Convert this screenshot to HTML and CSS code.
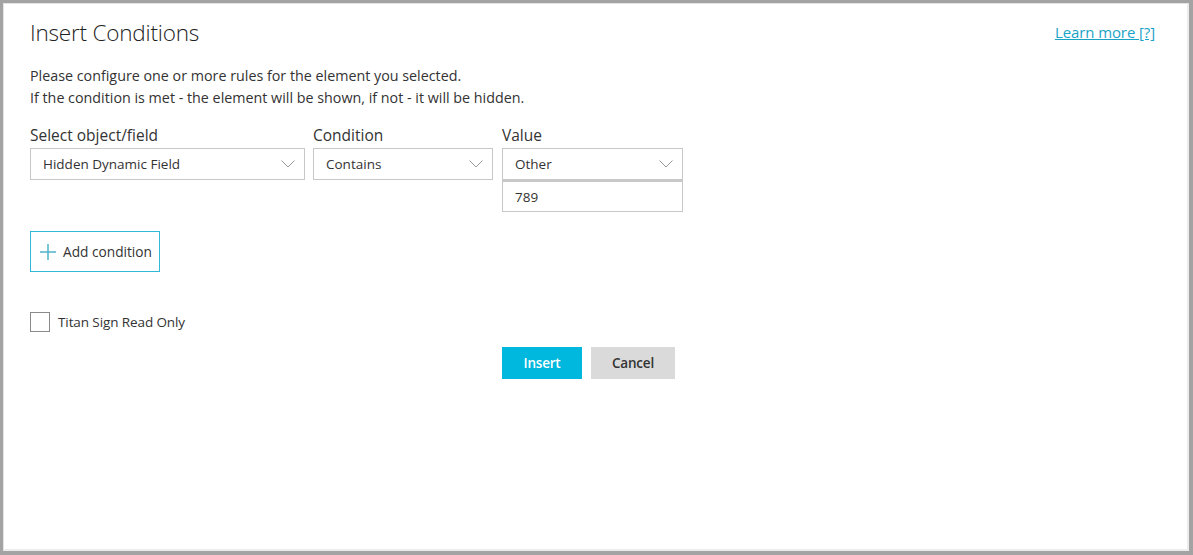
FILE: index.html
```html
<!DOCTYPE html>
<html lang="en">
<head>
<meta charset="utf-8">
<title>Insert Conditions</title>
<link rel="stylesheet" href="styles.css">
</head>
<body>
<div class="frame">
  <div class="dialog">
    <header class="head">
      <h1 class="title">Insert Conditions</h1>
      <a class="learn" href="#">Learn more [?]</a>
    </header>
    <p class="desc">Please configure one or more rules for the element you selected.<br>If the condition is met - the element will be shown, if not - it will be hidden.</p>

    <div class="rule">
      <div class="col col-field">
        <label class="lbl">Select object/field</label>
        <div class="select"><span>Hidden Dynamic Field</span><svg class="chev" viewBox="0 0 14 8" width="14" height="8"><path d="M0.5 0.5 L7 7 L13.5 0.5" fill="none" stroke="#9a9a9a" stroke-width="1"/></svg></div>
      </div>
      <div class="col col-cond">
        <label class="lbl">Condition</label>
        <div class="select"><span>Contains</span><svg class="chev" viewBox="0 0 14 8" width="14" height="8"><path d="M0.5 0.5 L7 7 L13.5 0.5" fill="none" stroke="#9a9a9a" stroke-width="1"/></svg></div>
      </div>
      <div class="col col-val">
        <label class="lbl">Value</label>
        <div class="select"><span>Other</span><svg class="chev" viewBox="0 0 14 8" width="14" height="8"><path d="M0.5 0.5 L7 7 L13.5 0.5" fill="none" stroke="#9a9a9a" stroke-width="1"/></svg></div>
        <div class="input">789</div>
      </div>
    </div>

    <button class="add" type="button"><svg class="plus" viewBox="0 0 16 16" width="16" height="16"><path d="M8 0 V16 M0 8 H16" stroke="#4fb3cc" stroke-width="1.5" fill="none"/></svg><span>Add condition</span></button>

    <label class="check"><span class="box"></span><span>Titan Sign Read Only</span></label>

    <div class="actions">
      <button class="btn btn-primary" type="button">Insert</button>
      <button class="btn btn-secondary" type="button">Cancel</button>
    </div>
  </div>
</div>
</body>
</html>
```
FILE: styles.css
```css
* { box-sizing: border-box; }
html, body { margin: 0; padding: 0; background: #a0a0a0; }
body { font-family: "Open Sans", "Noto Sans", sans-serif; color: #333; }

.frame {
  width: 1193px;
  height: 555px;
  background: #fff;
  border-style: solid;
  border-color: #a3a3a3;
  border-width: 3px 4px 4px 3px;
  box-shadow: inset 1px 1px 0 #e4e4e4, inset -2px -2px 0 #ececec;
}

.dialog { padding: 15px 34px 0 27px; }

.head { display: flex; justify-content: space-between; align-items: flex-start; }
.title { margin: 0; font-size: 22.5px; font-weight: 300; color: #222; line-height: 30px; letter-spacing: -0.2px; }
.learn { margin-top: 4px; font-size: 15px; color: #1ba3c6; text-decoration: underline; line-height: 20px; letter-spacing: -0.1px; }

.desc { margin: 17px 0 0; font-size: 14.3px; line-height: 22px; color: #333; letter-spacing: 0; }

.rule { display: flex; gap: 8px; margin-top: 16px; }
.col { display: flex; flex-direction: column; }
.col-field { width: 275px; }
.col-cond { width: 180px; }
.col-val { width: 181px; margin-left: 1px; }
.lbl { font-size: 15.5px; line-height: 20px; margin-bottom: 3px; color: #333; letter-spacing: 0; }

.select {
  height: 32px;
  border: 1px solid #c8c8c8;
  display: flex; align-items: center; justify-content: space-between;
  padding: 0 9px 0 12px;
  font-size: 13.5px; color: #333; letter-spacing: 0;
}
.chev { display: block; }
.input {
  height: 32px;
  border: 1px solid #c8c8c8;
  border-top: 2px solid #c8c8c8;
  display: flex; align-items: center;
  padding: 0 12px;
  font-size: 13.5px; color: #333;
}

.add {
  margin-top: 19px;
  display: flex; align-items: center; gap: 7px;
  height: 41px; width: 130px;
  padding: 0 0 0 9px;
  background: #fff;
  border: 1px solid #2fb8d8;
  font-family: inherit; font-size: 13.7px; color: #333; letter-spacing: 0;
  cursor: pointer;
}
.plus { display: block; }

.check { display: flex; align-items: center; gap: 8px; margin-top: 40px; font-size: 13.5px; color: #333; letter-spacing: -0.1px; }
.box { width: 20px; height: 20px; border: 1px solid #8a8a8a; background: #fff; }

.actions { display: flex; justify-content: center; gap: 9px; margin-top: 15px; padding-right: 8px; }
.btn {
  height: 32px; border: 0; font-family: inherit; font-size: 13.5px; font-weight: 600;
  letter-spacing: -0.2px; cursor: pointer;
}
.btn-primary { width: 80px; background: #00b8dd; color: #fff; }
.btn-secondary { width: 84px; background: #dadada; color: #333; }
```
